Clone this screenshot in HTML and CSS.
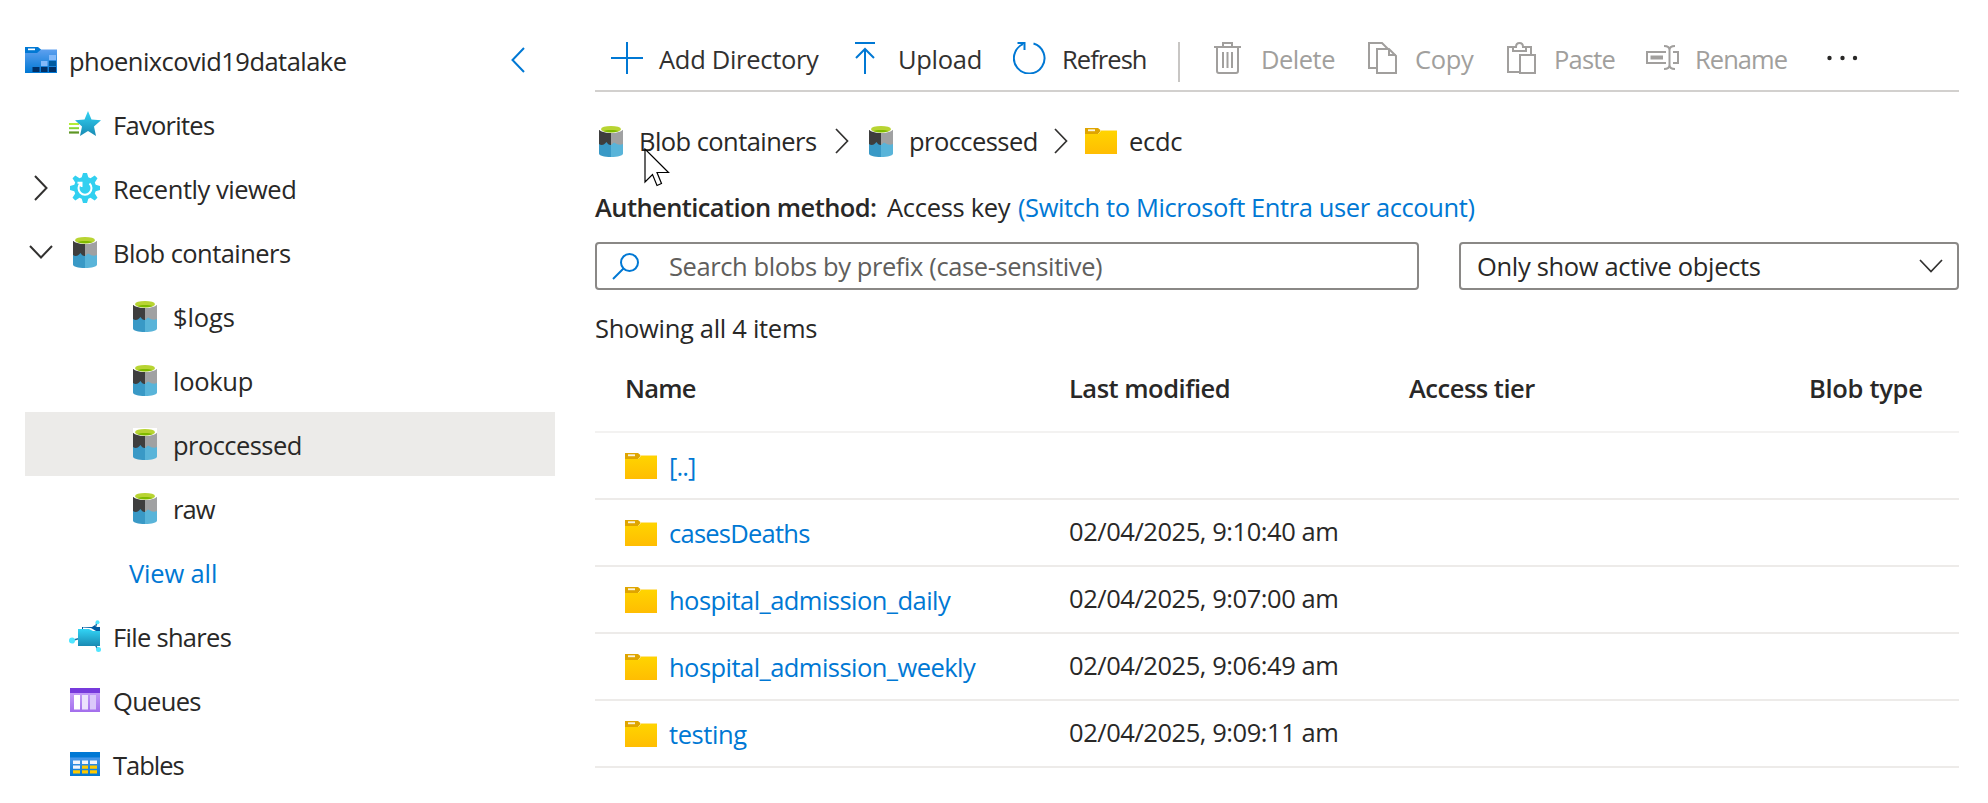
FILE: index.html
```html
<!DOCTYPE html>
<html lang="en">
<head>
<meta charset="utf-8">
<title>phoenixcovid19datalake</title>
<link rel="stylesheet" href="styles.css">
</head>
<body>
<svg class="defs" width="0" height="0">
  <defs>
    <linearGradient id="gold" x1="0" y1="0" x2="0" y2="1"><stop offset="0" stop-color="#ffd400"/><stop offset="1" stop-color="#ffbd02"/></linearGradient>
    <linearGradient id="blue" x1="0" y1="0" x2="0" y2="1"><stop offset="0" stop-color="#5ea0ef"/><stop offset="1" stop-color="#0078d4"/></linearGradient>
    <linearGradient id="cyan" x1="0" y1="0" x2="0" y2="1"><stop offset="0" stop-color="#32d4f5"/><stop offset="1" stop-color="#198ab3"/></linearGradient>
    <linearGradient id="violet" x1="0" y1="0" x2="0" y2="1"><stop offset="0" stop-color="#c39bf8"/><stop offset="1" stop-color="#a36eec"/></linearGradient>
    <symbol id="blob" viewBox="0 0 24 32">
      <path d="M0 5H12V20H0Z" fill="#3e3e3e"/><path d="M12 5H24V20H12Z" fill="#a0a1a2"/>
      <path d="M0 19C2 20.500 4 20 5.500 19L7.500 17L9 19C10 19.800 11 20 12 20V32C5 32 0 30.500 0 28.500Z" fill="#3999c6"/>
      <path d="M12 20C13 19 14 18.500 15 17.500L17 18.500C19 20 22 20 24 19V28.500C24 30.500 19 32 12 32Z" fill="#59b4d9"/>
      <path d="M0 0H24V4C24 6.300 18.500 8 12 8S0 6.300 0 4Z" class="rim"/><ellipse cx="12" cy="4.200" rx="10" ry="3.300" fill="#b8d432"/>
      <path d="M4 6C8 4.500 16 4.500 20 6C16 7.800 8 7.800 4 6Z" fill="#7fba00"/>
    </symbol>
    <symbol id="folder" viewBox="0 0 32 26">
      <path d="M0 0H13L16 2.500L13 6H0Z" fill="#dfa500"/><path d="M15 2H32V3.500H15Z" fill="#ffe68a"/><path d="M16 3H32V26H0V6H13Z" fill="url(#gold)"/><path d="M3 1.300H10V3.200H3Z" fill="#fff" opacity=".85"/>
    </symbol>
  </defs>
</svg>
<div class="app">
  <aside class="side">
    <div class="row head">
      <svg class="lake" width="32" height="26" viewBox="0 0 32 26"><path d="M0 0H13L16 2.500V6H0Z" fill="#0078d4"/><path d="M0 6H12L16 2.500H32V26H0Z" fill="url(#blue)"/><path d="M3 1.500H10V3.200H3Z" fill="#fff"/><path d="M24 8h7v5h-7zM16 14h6.500v5h-6.500z" fill="#83b9f9"/><path d="M24 14h7v5h-7z" fill="#005ba1"/><path d="M7.500 20h7v5h-7zM16 20h6.500v5h-6.500zM24 20h7v5h-7z" fill="#003067"/></svg>
      <span class="t account">phoenixcovid19datalake</span>
      <svg class="collapse" width="14" height="26" viewBox="0 0 14 26"><path d="M13 1L1.500 13L13 25" fill="none" stroke="#0078d4" stroke-width="2"/></svg>
    </div>
    <div class="row"><span class="tw"></span><span class="ic"><svg width="32" height="26" viewBox="0 0 32 26"><path d="M0 12h10v2h-10z" fill="#b4ec36"/><path d="M0 16.200h10v2h-10z" fill="#86d633"/><path d="M0 20.400h10v2.200h-10z" fill="#5e9624"/><path d="M19 0L22.500 8.500L32 9.300L25 15.500L27 25L19 20L11 25L13 15.500L6 9.300L15.500 8.500Z" fill="url(#cyan)"/></svg></span><span class="t favs">Favorites</span></div>
    <div class="row"><span class="tw"><svg width="14" height="26" viewBox="0 0 14 26"><path d="M1 1L12.500 13L1 25" fill="none" stroke="#323130" stroke-width="2"/></svg></span><span class="ic"><svg width="30" height="30" viewBox="0 0 30 30"><path d="M13 0H17L18.300 4.300L20.500 5.200L24.700 2.500L27.500 5.300L24.800 9.500L25.700 11.700L30 13V17L25.700 18.300L24.800 20.500L27.500 24.700L24.700 27.500L20.500 24.800L18.300 25.700L17 30H13L11.700 25.700L9.500 24.800L5.300 27.500L2.500 24.700L5.200 20.500L4.300 18.300L0 17V13L4.300 11.700L5.200 9.500L2.500 5.300L5.300 2.500L9.500 5.200L11.700 4.300Z" fill="#32d0f0"/><path d="M10.500 10.500A6.500 6.500 0 1 0 19.500 10.500M7.500 9.800H11.500V14" fill="none" stroke="#fff" stroke-width="2"/></svg></span><span class="t recent">Recently viewed</span></div>
    <div class="row"><span class="tw"><svg width="24" height="14" viewBox="0 0 24 14"><path d="M1 1L12 12.500L23 1" fill="none" stroke="#323130" stroke-width="2"/></svg></span><span class="ic"><svg width="24" height="32"><use href="#blob"/></svg></span><span class="t blobs">Blob containers</span></div>
    <div class="row child"><svg width="24" height="32"><use href="#blob"/></svg><span class="t logs">$logs</span></div>
    <div class="row child"><svg width="24" height="32"><use href="#blob"/></svg><span class="t lookup">lookup</span></div>
    <div class="row child selected"><svg width="24" height="32"><use href="#blob"/></svg><span class="t proc">proccessed</span></div>
    <div class="row child"><svg width="24" height="32"><use href="#blob"/></svg><span class="t raw">raw</span></div>
    <div class="row all"><a class="t viewall">View all</a></div>
    <div class="row"><span class="tw"></span><span class="ic"><svg width="32" height="32" viewBox="0 0 32 32"><path d="M3 20.500L12 18M26 9L28 2M26 24L29 30" stroke="#1d73a8" stroke-width="1.500"/><path d="M13 7H23L26 5V7H31V13H13Z" fill="#005ba1"/><path d="M14 7.500L22 8L27 11H14Z" fill="#fff"/><path d="M9 9H20L24 11H31V26H9Z" fill="url(#cyan)"/><circle cx="3" cy="20.500" r="3.100" fill="#50e6ff"/><circle cx="28.500" cy="2.200" r="2" fill="#50e6ff"/><circle cx="29.500" cy="29.500" r="2.500" fill="#50e6ff"/></svg></span><span class="t files">File shares</span></div>
    <div class="row"><span class="tw"></span><span class="ic"><svg width="30" height="24" viewBox="0 0 30 24"><path d="M0 5H30V24H0Z" fill="url(#violet)"/><path d="M0 0H30V5H0Z" fill="#773adc"/><path d="M4 7h6v14.500h-6z" fill="#fff"/><path d="M12 7h6v14.500h-6z" fill="#ece2fd"/><path d="M20 7h6v14.500h-6z" fill="#dbc8fa"/></svg></span><span class="t queues">Queues</span></div>
    <div class="row"><span class="tw"></span><span class="ic"><svg width="30" height="24" viewBox="0 0 30 24"><path d="M0 0H30V24H0Z" fill="url(#blue)"/><path d="M0 0H30V5.500H0Z" fill="#0078d4"/><path d="M3 8.500h7v3.500h-7zM12 8.500h6v3.500h-6zM20 8.500h7v3.500h-7zM3 13.500h7v3.200h-7z" fill="#f2f5fb"/><path d="M12 13.500h6v3.200h-6zM20 13.500h7v3.200h-7zM3 18.300h7v3.200h-7zM12 18.300h6v3.200h-6zM20 18.300h7v3.200h-7z" fill="#ffca00"/></svg></span><span class="t tables">Tables</span></div>
  </aside>
  <main class="main">
    <div class="toolbar">
      <button class="tool add"><svg width="32" height="32" viewBox="0 0 32 32"><path d="M0 16H32M16 0V32" stroke="#0078d4" stroke-width="2"/></svg><span class="t">Add Directory</span></button>
      <button class="tool upload"><svg width="20" height="32" viewBox="0 0 20 32"><path d="M0 1H20M10 32V7M1 16L10 7L19 16" fill="none" stroke="#0078d4" stroke-width="2"/></svg><span class="t">Upload</span></button>
      <button class="tool refresh"><svg width="33" height="32" viewBox="0 0 33 32"><path d="M20.500 1.500A15.300 15.300 0 1 1 10 2.200M4.500 1H11.500V8" fill="none" stroke="#0078d4" stroke-width="2"/></svg><span class="t">Refresh</span></button>
      <i class="sep"></i>
      <button class="tool off del"><svg width="27" height="32" viewBox="0 0 27 32"><path d="M0 5H27M9 5V1H18V5M3 5V29Q3 31 5 31H22Q24 31 24 29V5M9 10V26M13.500 10V26M18 10V26" fill="none" stroke="#a19f9d" stroke-width="2"/></svg><span class="t">Delete</span></button>
      <button class="tool off copy"><svg width="29" height="32" viewBox="0 0 29 32"><path d="M9 26H1V1H14L20 7M9 7H21L28 14V31H9ZM21 7V13H28" fill="none" stroke="#a19f9d" stroke-width="2"/></svg><span class="t">Copy</span></button>
      <button class="tool off paste"><svg width="29" height="32" viewBox="0 0 29 32"><path d="M13 30H1V5H6V9H19V5H24V13M6 5H9Q9 1 12.500 1T16 5H19M13 13H28V31H13Z" fill="none" stroke="#a19f9d" stroke-width="2"/></svg><span class="t">Paste</span></button>
      <button class="tool off rename"><svg width="33" height="26" viewBox="0 0 33 26"><path d="M20 7H1V18H20M27 7H32V18H27M18 1Q23.500 1 23.500 5V20Q23.500 24 18 24M29 1Q23.500 1 23.500 5M23.500 20Q23.500 24 29 24" fill="none" stroke="#a19f9d" stroke-width="2"/><path d="M4.500 10.500H17V14.500H4.500Z" fill="#a19f9d"/></svg><span class="t">Rename</span></button>
      <svg class="more" width="32" height="6" viewBox="0 0 32 6"><g fill="#292827"><circle cx="2.500" cy="3" r="2.200"/><circle cx="15.500" cy="3" r="2.200"/><circle cx="28" cy="3" r="2.200"/></g></svg>
    </div>
    <nav class="crumbs">
      <svg width="24" height="32"><use href="#blob"/></svg><span class="t blobs2">Blob containers</span>
      <svg width="14" height="26" viewBox="0 0 14 26"><path d="M1 1L12.500 13L1 25" fill="none" stroke="#323130" stroke-width="1.700"/></svg>
      <svg class="b2" width="24" height="32"><use href="#blob"/></svg><span class="t proc2">proccessed</span>
      <svg width="14" height="26" viewBox="0 0 14 26"><path d="M1 1L12.500 13L1 25" fill="none" stroke="#323130" stroke-width="1.700"/></svg>
      <svg class="f1" width="32" height="26"><use href="#folder"/></svg><span class="t ecdc">ecdc</span>
    </nav>
    <div class="auth"><b class="t method">Authentication method:</b><span class="t key">Access key</span><a class="t switch">(Switch to Microsoft Entra user account)</a></div>
    <div class="filters">
      <div class="search"><svg width="27" height="27" viewBox="0 0 27 27"><circle cx="17.500" cy="9.500" r="8.500" fill="none" stroke="#0078d4" stroke-width="2"/><path d="M11.500 15.500L1 26" stroke="#0078d4" stroke-width="2"/></svg><span class="t ph">Search blobs by prefix (case-sensitive)</span></div>
      <div class="select"><span class="t opt">Only show active objects</span><svg width="24" height="14" viewBox="0 0 24 14"><path d="M1 1L12 12.500L23 1" fill="none" stroke="#323130" stroke-width="1.700"/></svg></div>
    </div>
    <div class="count"><span class="t showing">Showing all 4 items</span></div>
    <div class="grid ghead"><b class="t h1">Name</b><b class="t h2">Last modified</b><b class="t h3">Access tier</b><b class="t h4">Blob type</b></div>
    <div class="grid"><div class="name"><svg width="32" height="26"><use href="#folder"/></svg><a class="t up">[..]</a></div></div>
    <div class="grid"><div class="name"><svg width="32" height="26"><use href="#folder"/></svg><a class="t cases">casesDeaths</a></div><span class="t date">02/04/2025, 9:10:40 am</span></div>
    <div class="grid"><div class="name"><svg width="32" height="26"><use href="#folder"/></svg><a class="t daily">hospital_admission_daily</a></div><span class="t date">02/04/2025, 9:07:00 am</span></div>
    <div class="grid"><div class="name"><svg width="32" height="26"><use href="#folder"/></svg><a class="t weekly">hospital_admission_weekly</a></div><span class="t date">02/04/2025, 9:06:49 am</span></div>
    <div class="grid"><div class="name"><svg width="32" height="26"><use href="#folder"/></svg><a class="t testing">testing</a></div><span class="t date">02/04/2025, 9:09:11 am</span></div>
  </main>
</div>
<svg class="cursor" width="26" height="40" viewBox="0 0 26 40"><path d="M1 1V34L8.500 26.500L13 37.500L17.500 35.500L13 24.500H24.500Z" fill="#fff" stroke="#000" stroke-width="1.200"/></svg>
</body>
</html>
```

FILE: styles.css
```css
* { box-sizing: border-box; }
body {
  margin: 0;
  width: 1988px;
  height: 803px;
  overflow: hidden;
  background: #fff;
  color: #292827;
  font: 25.5px/36px "Open Sans", "Noto Sans", sans-serif;
}
svg { display: block; flex: none; }
.defs { position: absolute; }
.rim { fill: #fff; }
.t { display: block; flex: none; white-space: nowrap; letter-spacing: -0.3px; }
a { color: #0078d4; }
b { font-weight: 600; }
.app { display: flex; height: 803px; }

.side { width: 595px; padding: 28px 40px 0 25px; flex: none; }
.row { display: flex; align-items: center; height: 64px; }
.row .t { padding-top: 2px; }
.lake { margin: 0 12px 0 0; }
.collapse { margin-left: auto; margin-right: 30px; }
.tw { display: flex; justify-content: center; width: 32px; }
.ic { display: flex; justify-content: center; width: 32px; margin: 0 12px; }
.child { padding-left: 108px; gap: 16px; }
.selected { background: #ecebe9; }
.selected .rim { fill: #ecebe9; }
.all { padding-left: 104px; }
.account { letter-spacing: -0.53px; }
.favs { letter-spacing: -0.72px; }
.recent { letter-spacing: -0.47px; }
.blobs, .blobs2, .proc, .proc2 { letter-spacing: -0.56px; }
.logs { letter-spacing: -0.1px; }
.raw { letter-spacing: -0.9px; }
.viewall { letter-spacing: -0.15px; }
.files, .queues { letter-spacing: -0.7px; }
.tables { letter-spacing: -1px; }

.main { width: 1364px; flex: none; }
.toolbar { display: flex; align-items: center; height: 92px; padding: 28px 0 2px 16px; border-bottom: 2px solid #d2d0ce; }
.tool { display: flex; align-items: center; border: 0; padding: 0; background: none; color: #323130; font: inherit; flex: none; gap: 16px; }
.tool .t { padding-top: 2px; }
.tool.off { color: #a19f9d; }
.add { width: 244px; }
.upload { width: 158px; gap: 23px; }
.refresh { width: 165px; }
.refresh .t, .rename .t { letter-spacing: -0.95px; }
.sep { width: 2px; height: 40px; margin-top: 8px; background: #c8c6c4; }
.del { width: 154px; margin-left: 34px; gap: 20px; }
.del .t { letter-spacing: -0.5px; }
.copy { width: 139px; gap: 18px; }
.paste { width: 139px; gap: 18px; }
.paste .t { letter-spacing: -0.8px; }
.rename { width: 181px; }

.crumbs { display: flex; align-items: center; height: 98px; padding-left: 4px; }
.blobs2 { width: 196px; margin-left: 16px; }
.b2 { margin-left: 20px; }
.proc2 { width: 145px; margin-left: 16px; }
.f1 { margin-left: 17px; }
.ecdc { margin-left: 12px; }

.auth { display: flex; height: 52px; margin-top: -1px; margin-bottom: 1px; }
.method { width: 292px; letter-spacing: -0.58px; }
.key { width: 131px; }
.switch { letter-spacing: -0.4px; }

.filters { display: flex; gap: 40px; height: 48px; }
.search, .select { display: flex; align-items: center; border: 2px solid #8a8886; border-radius: 4px; }
.search { width: 824px; padding-left: 15px; color: #605e5c; }
.ph { margin-left: 30px; letter-spacing: -0.4px; }
.select { width: 500px; justify-content: space-between; padding: 0 14px 0 16px; }
.opt { letter-spacing: -0.33px; }

.count { height: 77px; padding-top: 20px; }
.grid { display: grid; grid-template-columns: 444px 340px 400px 1fr; align-items: center; height: 67px; padding-left: 30px; border-bottom: 2px solid #edebe9; }
.ghead { height: 66px; padding-bottom: 23px; border-color: #f3f2f1; }
.h1 { letter-spacing: -0.8px; }
.h2, .h3 { letter-spacing: -0.5px; }
.name { display: flex; align-items: center; gap: 12px; }
.up { letter-spacing: -0.9px; }
.cases { letter-spacing: -0.75px; }
.daily, .weekly { letter-spacing: -0.54px; }
.testing { letter-spacing: -0.4px; }
.date { letter-spacing: -0.45px; padding-bottom: 4px; }

.cursor { position: absolute; left: 644px; top: 148px; }
```
